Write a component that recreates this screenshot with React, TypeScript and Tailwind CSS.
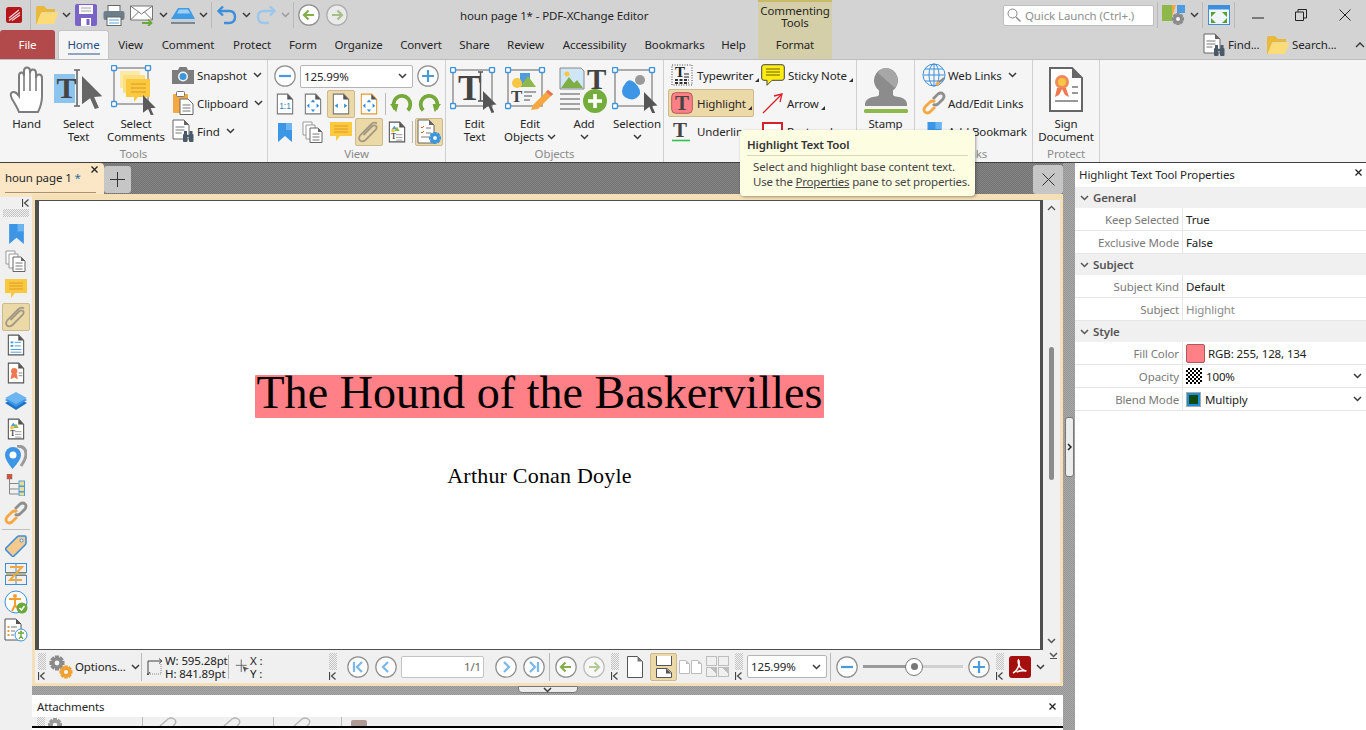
import type { ReactNode } from 'react'
import clsx from 'clsx'

// ---------- small shared drawings ----------

function Chev({ c = '#3a3a3a', className }: { c?: string; className?: string }) {
  return (
    <svg width="9" height="6" viewBox="0 0 9 6" className={clsx('shrink-0', className)}>
      <path d="M1 1l3.5 3.5L8 1" fill="none" stroke={c} strokeWidth="1.5" />
    </svg>
  )
}

function Corner() {
  return (
    <svg width="4" height="4" viewBox="0 0 4 4" className="ml-[2px] mt-[10px] shrink-0">
      <path d="M4 0v4H0z" fill="#333" />
    </svg>
  )
}

function Collapse() {
  return (
    <svg width="7" height="8" viewBox="0 0 7 8" className="shrink-0">
      <path d="M.5 0v8M6.5 .5L2.5 4l4 3.5" fill="none" stroke="#444" strokeWidth="1.2" />
    </svg>
  )
}

function Grip({ className }: { className?: string }) {
  return (
    <div className={clsx('flex h-[27px] w-[8px] shrink-0 flex-col justify-between', className)}>
      <div className="h-[17px] w-[8px] bg-[repeating-conic-gradient(#c4c4c4_0_25%,transparent_0_50%)] bg-[length:2px_2px]" />
      <Collapse />
    </div>
  )
}

function Divider({ className }: { className?: string }) {
  return <div className={clsx('w-px shrink-0 bg-[#b9b9b9]', className)} />
}

function Circle({ children, off, size = 22 }: { children: ReactNode; off?: boolean; size?: number }) {
  return (
    <svg width={size} height={size} viewBox="0 0 22 22" className="shrink-0" opacity={off ? 0.55 : 1}>
      <circle cx="11" cy="11" r="10.2" fill="#fdfdfd" stroke="#8f8f8f" strokeWidth="1.2" />
      {children}
    </svg>
  )
}

const ArrowL = <path d="M16 11H6.5M10.5 6.5L6 11l4.5 4.5" fill="none" stroke="#84ad4c" strokeWidth="2.2" />
const ArrowR = <path d="M6 11h9.5M11.5 6.5L16 11l-4.5 4.5" fill="none" stroke="#84ad4c" strokeWidth="2.2" />
const MinusG = <path d="M5 11h12" stroke="#4a9bdc" strokeWidth="2.2" />
const PlusG = <path d="M5 11h12M11 5v12" stroke="#4a9bdc" strokeWidth="2.2" />

function Doc({ w = 20, h = 24, children, stroke = '#555' }: { w?: number; h?: number; children?: ReactNode; stroke?: string }) {
  return (
    <svg width={w} height={h} viewBox="0 0 20 24" className="shrink-0">
      <path d="M1.5 1h11.5l5.5 6v16H1.5z" fill="#fff" stroke={stroke} strokeWidth="1.2" />
      <path d="M12.5 1l6 6h-6z" fill="#555" />
      {children}
    </svg>
  )
}

const Cursor = ({ x, y, s = 1, c = '#555' }: { x: number; y: number; s?: number; c?: string }) => (
  <path transform={`translate(${x} ${y}) scale(${s})`} d="M0 0l15 15-6 .5 3.5 8-3 1-3.5-8L0 21z" fill={c} />
)

const Frame = ({ x, y, w, h }: { x: number; y: number; w: number; h: number }) => (
  <>
    <rect x={x} y={y} width={w} height={h} fill="none" stroke="#9a9a9a" strokeWidth="1.6" />
    {[[x, y], [x + w, y], [x, y + h]].map(([a, b], i) => (
      <rect key={i} x={a - 2.5} y={b - 2.5} width="5" height="5" rx="1" fill="#fff" stroke="#3c95dc" strokeWidth="1.4" />
    ))}
  </>
)

const SerifT = ({ x, y, size, c = '#444' }: { x: number; y: number; size: number; c?: string }) => (
  <text x={x} y={y} fontFamily="Liberation Serif" fontWeight="700" fontSize={size} fill={c}>
    T
  </text>
)

function Binoculars({ x, y }: { x: number; y: number }) {
  return (
    <g transform={`translate(${x} ${y})`} fill="#4a5a68">
      <rect x="0" y="3" width="4.5" height="8" rx="1" />
      <rect x="6" y="3" width="4.5" height="8" rx="1" />
      <rect x="1" y="0" width="3" height="4" />
      <rect x="6.5" y="0" width="3" height="4" />
      <rect x="4" y="4" width="3" height="2" />
    </g>
  )
}

function Gear({ x, y, r, c }: { x: number; y: number; r: number; c: string }) {
  return (
    <g transform={`translate(${x} ${y})`}>
      {[0, 45, 90, 135].map((a) => (
        <rect key={a} x={-r * 0.28} y={-r} width={r * 0.56} height={r * 2} fill={c} transform={`rotate(${a})`} />
      ))}
      <circle r={r * 0.72} fill={c} />
      <circle r={r * 0.32} fill="#f5f5f5" />
    </g>
  )
}

function FolderShape({ w = 24, h = 20 }: { w?: number; h?: number }) {
  return (
    <svg width={w} height={h} viewBox="0 0 24 20" className="shrink-0">
      <path d="M1 3q0-2 2-2h6l3 3h8v3H7L2 19H1z" fill="#e8b93c" />
      <path d="M6 7.5h17.5L19 19H1.5z" fill="#fbdc78" />
    </svg>
  )
}

// ---------- quick access icons ----------

const Logo = () => (
  <svg width="16" height="16" viewBox="0 0 16 16" className="shrink-0">
    <rect width="16" height="16" rx="2.5" fill="#b5161c" />
    <path d="M3 11L13 3M3 13.5L14 5.5M6 13.5l8-5.5" stroke="#f6d8d8" strokeWidth="1.2" />
  </svg>
)

const Save = () => (
  <svg width="22" height="22" viewBox="0 0 22 22" className="shrink-0">
    <rect width="22" height="22" rx="2" fill="#7a63c6" />
    <rect x="4" y="1" width="14" height="9" fill="#f7f7f7" />
    <path d="M6 4h10M6 7h10" stroke="#aaa" />
    <rect x="6" y="14" width="10" height="8" fill="#fff" />
    <rect x="11.5" y="15" width="3" height="6" fill="#7a63c6" />
  </svg>
)

const Printer = () => (
  <svg width="22" height="21" viewBox="0 0 22 21" className="shrink-0">
    <rect x="5" y="0.5" width="12" height="7" fill="#fff" stroke="#666" />
    <rect x="0.5" y="6" width="21" height="9" rx="2" fill="#6d7d8a" />
    <rect x="4" y="12" width="14" height="8.5" fill="#fff" stroke="#666" />
    <path d="M6 15h10M6 18h10" stroke="#5aa6e0" />
  </svg>
)

const Mail = () => (
  <svg width="24" height="21" viewBox="0 0 24 21" className="shrink-0">
    <path d="M.5 1h22v14H.5z" fill="#fff" stroke="#777" />
    <path d="M.5 1L11.5 9l11-8M.5 15l8-8M22.5 15l-8-8" fill="none" stroke="#777" />
    <path d="M12 18h9M18 14.5l3.5 3.5-3.5 3" fill="none" stroke="#6aa83a" strokeWidth="1.8" />
  </svg>
)

const Cloud = () => (
  <svg width="24" height="17" viewBox="0 0 24 17" className="shrink-0">
    <path d="M7 1h11l6 11H0z" fill="#3d9ce6" />
    <path d="M8 2.5h9l2 4H6z" fill="#9ed0f5" />
    <rect y="12" width="24" height="3" fill="#c9ced2" />
    <rect y="15" width="24" height="2" fill="#7b8791" />
  </svg>
)

const Undo = ({ c = '#3d8fdc', flip }: { c?: string; flip?: boolean }) => (
  <svg width="20" height="20" viewBox="0 0 20 20" className={clsx('shrink-0', flip && '-scale-x-100')}>
    <path d="M6 1.5L1.5 6 6 10.5" fill="none" stroke={c} strokeWidth="2.4" />
    <path d="M2 6h10q6 0 6 6t-6 6H7" fill="none" stroke={c} strokeWidth="2.4" />
  </svg>
)

// ---------- ribbon icons ----------

const Hand = () => (
  <svg width="36" height="48" viewBox="0 0 36 48">
    <path
      d="M10 46Q8 41 3 33Q0 27 4 26Q7 25.500 10 30V10Q10 6.500 12.500 6.500Q15 6.500 15 10V5Q15 1.500 18 1.500Q21 1.500 21 5V7Q21 3.500 24 3.500Q27 3.500 27 7V12Q27 8.500 30 8.500Q33 8.500 33 12V30Q33 38 29 46Z"
      fill="#fff"
      stroke="#7d7d7d"
      strokeWidth="2"
    />
    <path d="M15 8V25M21 6V25M27 10V25" stroke="#7d7d7d" strokeWidth="1.6" fill="none" />
  </svg>
)

const SelectText = () => (
  <svg width="50" height="42" viewBox="0 0 50 42">
    <rect x="0" y="5" width="21" height="29" fill="#8cc4ee" />
    <SerifT x={2.5} y={29} size={30} />
    <path d="M20 1h6M23 1v36M20 37h6" stroke="#666" strokeWidth="1.6" fill="none" />
    <Cursor x={28} y={7} s={1.35} c="#666" />
  </svg>
)

const SelectComments = () => (
  <svg width="50" height="50" viewBox="0 0 50 50">
    <Frame x={3} y={3} w={34} h={36} />
    <rect x="9" y="6" width="20" height="17" fill="#fbe9a6" />
    <rect x="12" y="10" width="22" height="18" fill="#fcdf82" />
    <path d="M15 14h24v18H27l-4 5v-5h-8z" fill="#fbc93e" />
    <path d="M20 19h15M20 23h15M20 27h15" stroke="#d9992c" strokeWidth="1.2" />
    <Cursor x={32} y={30} s={0.85} c="#5b5b5b" />
  </svg>
)

const Camera = () => (
  <svg width="22" height="17" viewBox="0 0 22 17" className="shrink-0">
    <path d="M0 3h6l1.500-3h7L16 3h6v14H0z" fill="#7d7d7d" />
    <circle cx="11" cy="9.500" r="5" fill="#eef6fc" />
    <circle cx="11" cy="9.500" r="3.500" fill="#3d95dc" />
  </svg>
)

const Clipboard = () => (
  <svg width="22" height="24" viewBox="0 0 22 24" className="shrink-0">
    <rect x="1" y="3" width="15" height="19" rx="1" fill="#f5a742" />
    <rect x="4.500" y="0.500" width="8" height="5" rx="1" fill="#fff" stroke="#777" />
    <path d="M8 8h8l5 5v10.500H8z" fill="#fff" stroke="#666" />
    <path d="M10.500 14h8M10.500 17h8M10.500 20h8" stroke="#777" />
  </svg>
)

const FindDoc = ({ size = 22 }: { size?: number }) => (
  <svg width={size} height={size + 2} viewBox="0 0 22 24" className="shrink-0">
    <path d="M1 1h11l5 5v14H1z" fill="#fff" stroke="#666" />
    <path d="M12 1l5 5h-5z" fill="#666" />
    <path d="M3.500 8h9M3.500 11h9M3.500 14h6" stroke="#777" />
    <Binoculars x={11} y={12} />
  </svg>
)

function ViewDoc({ kind }: { kind: 'one' | 'fit' | 'width' | 'visible' }) {
  const stroke = kind === 'visible' ? '#e89a2c' : '#777'
  const arrows = (
    <g fill="#2f8fdc">
      <path d="M10 7l2.500 3h-5zM10 21l2.500-3h-5zM3 14l3-2.500v5zM17 14l-3-2.500v5z" />
    </g>
  )
  return (
    <Doc w={18} h={22} stroke={stroke}>
      {kind === 'one' && (
        <text x="10" y="18" fontSize="9.500" textAnchor="middle" fontFamily="Liberation Sans" fill="#2f7fc4">
          1:1
        </text>
      )}
      {(kind === 'fit' || kind === 'visible') && arrows}
      {kind === 'width' && (
        <g fill="#2f8fdc">
          <path d="M3 14l3.500-2.500v5zM17 14l-3.500-2.500v5z" />
        </g>
      )}
    </Doc>
  )
}

const Rotate = ({ flip }: { flip?: boolean }) => (
  <svg width="23" height="22" viewBox="0 0 22 20" className={clsx('shrink-0', flip && '-scale-x-100')}>
    <path d="M5 15A8 8 0 1 1 17 16" fill="none" stroke="#76a83a" strokeWidth="3.6" />
    <path d="M0 10l8 0-2 8z" fill="#76a83a" />
  </svg>
)

const BookmarkIc = ({ w = 14, h = 20 }: { w?: number; h?: number }) => (
  <svg width={w} height={h} viewBox="0 0 14 20" className="shrink-0">
    <path d="M0 1h14v19l-7-6-7 6z" fill="#3d95e6" />
    <path d="M8 1h6v7H8z" fill="#6db5f0" />
  </svg>
)

const Pages = () => (
  <svg width="22" height="22" viewBox="0 0 22 22" className="shrink-0">
    <path d="M1 1h9v13H1z" fill="#fff" stroke="#999" />
    <path d="M4 4h9v14H4z" fill="#fff" stroke="#999" />
    <path d="M8 7h8l4 4v10.500H8z" fill="#fff" stroke="#666" />
    <path d="M16 7l4 4h-4z" fill="#666" />
    <path d="M10.500 13h7M10.500 16h7M10.500 19h7" stroke="#777" />
  </svg>
)

const CommentIc = () => (
  <svg width="22" height="20" viewBox="0 0 22 20" className="shrink-0">
    <path d="M0 0h22v14H10l-4 5v-5H0z" fill="#fbc93e" />
    <path d="M4 4h14M4 7h14M4 10h14" stroke="#e0982c" />
  </svg>
)

const Clip = () => (
  <svg width="24" height="24" viewBox="0 0 24 24" className="shrink-0">
    <path
      d="M20 3.500Q17 1.500 14.500 4L3.500 15Q1 18 3 20.500Q5.500 22.500 8.500 20L18.500 10Q20.500 7.500 19 6Q17 4.500 15 6.500L6.500 15"
      fill="none"
      stroke="#a39a84"
      strokeWidth="1.8"
    />
  </svg>
)

const ContentDoc = () => (
  <Doc w={18} h={22}>
    <path d="M4 9l3-4 3 4z" fill="#4d9be0" />
    <path d="M7 11l3-5 3 5z" fill="#8fb84a" />
    <circle cx="5.500" cy="10.500" r="2" fill="#f6c644" />
    <text x="3.500" y="20" fontSize="8" fontWeight="700" fontFamily="Liberation Serif" fill="#444">
      T
    </text>
    <path d="M9 15h7M9 18h7M9 21h7" stroke="#777" strokeWidth="0.8" />
  </Doc>
)

const SettingsDoc = () => (
  <svg width="26" height="26" viewBox="0 0 26 26" className="shrink-0">
    <path d="M2 1h11l5 5v18H2z" fill="#fff" stroke="#666" />
    <path d="M13 1l5 5h-5z" fill="#666" />
    <path d="M5 8l1 1 2-2M5 13l1 1 2-2" fill="none" stroke="#d8562c" />
    <path d="M10 9h5M10 14h5M5 18h8" stroke="#777" />
    <Gear x={19} y={19} r={6} c="#3d95dc" />
  </svg>
)

const EditText = () => (
  <svg width="50" height="46" viewBox="0 0 50 46">
    <Frame x={3} y={3} w={39} h={36} />
    <SerifT x={8} y={33} size={35} />
    <path d="M28 5h5M30.500 5v29M28 34h5" stroke="#555" strokeWidth="1.4" fill="none" />
    <Cursor x={33} y={24} s={0.9} />
  </svg>
)

const EditObjects = () => (
  <svg width="50" height="46" viewBox="0 0 50 46">
    <Frame x={3} y={3} w={34} h={36} />
    <path d="M15 6h10v11H15z" fill="#4d9be0" />
    <path d="M15 20l8-11 8 11z" fill="#8fb84a" />
    <circle cx="12" cy="16" r="5" fill="#f6c644" />
    <SerifT x={6} y={35} size={17} />
    <path d="M19 25h12M19 29h8M19 33h6" stroke="#888" strokeWidth="1.3" />
    <path d="M28 38l15-15 5 4-15 15-7 1z" fill="#f5a742" />
    <path d="M41 25l5 4 2-2-5-4z" fill="#e8705a" />
  </svg>
)

const AddIc = () => (
  <svg width="48" height="46" viewBox="0 0 48 46" className="overflow-visible">
    <path d="M0 1h21l3 3v18H0z" fill="#cfe6f7" stroke="#888" />
    <path d="M1 21l8-11 5 6 3-3 6 8z" fill="#7fae46" />
    <circle cx="7" cy="7" r="2.500" fill="#f6c644" />
    <SerifT x={27} y={22} size={29} />
    <path d="M0 27h20M0 32h20M0 37h20M0 42h20" stroke="#888" strokeWidth="1.6" />
    <circle cx="35" cy="34" r="12" fill="#74ad3c" />
    <path d="M28 34h14M35 27v14" stroke="#fff" strokeWidth="3.600" />
  </svg>
)

const Selection = () => (
  <svg width="50" height="46" viewBox="0 0 50 46">
    <Frame x={3} y={3} w={37} h={36} />
    <circle cx="28" cy="13" r="5" fill="#9a9a9a" />
    <path d="M13 17q4-7 10-1t5 11q-4 7-11 5T10 24q0-4 3-7z" fill="#3d95e6" />
    <Cursor x={32} y={25} s={0.9} />
  </svg>
)

const Typewriter = () => (
  <svg width="22" height="22" viewBox="0 0 22 22" className="shrink-0">
    <rect x="1" y="1" width="20" height="20" fill="none" stroke="#444" strokeDasharray="1 1.500" />
    <SerifT x={4} y={13} size={15} c="#222" />
    <path d="M13 10h5M13 13h5" stroke="#222" />
    <path d="M4 16h14M4 19h14" stroke="#333" strokeWidth="1.800" strokeDasharray="3 1.500" />
  </svg>
)

const Sticky = () => (
  <svg width="24" height="22" viewBox="0 0 24 22" className="shrink-0">
    <path d="M3 .7h18q2.300 0 2.300 2.300v11q0 2.300-2.300 2.300H11l-5 5v-5H3q-2.300 0-2.300-2.300V3Q.7.7 3 .7z" fill="#ffec12" stroke="#444" />
    <path d="M5 5h14M5 8h14M5 11h14" stroke="#6a6200" />
  </svg>
)

const HighlightIc = () => (
  <svg width="22" height="22" viewBox="0 0 22 22" className="shrink-0">
    <rect x=".7" y=".7" width="20.600" height="20.600" rx="4" fill="#ff8086" stroke="#b25a5a" />
    <SerifT x={4} y={18} size={21} />
  </svg>
)

const ArrowIc = () => (
  <svg width="21" height="21" viewBox="0 0 21 21" className="shrink-0">
    <path d="M1 20L19 2" stroke="#d8202a" strokeWidth="1.300" />
    <path d="M12 3l8-2-2 8" fill="none" stroke="#d8202a" strokeWidth="1.300" />
  </svg>
)

const UnderlineIc = () => (
  <svg width="20" height="22" viewBox="0 0 20 22" className="shrink-0 overflow-visible">
    <SerifT x={2} y={17} size={21} />
    <path d="M1 20.500h18" stroke="#2fc24a" strokeWidth="1.600" />
  </svg>
)

const Stamp = () => (
  <svg width="46" height="46" viewBox="0 0 46 46">
    <path d="M23 1A12.500 12.500 0 0 1 30 23.500V27q0 2 3 2.500 10 1 11 7V39H2v-2.500q1-6 11-7 3-.5 3-2.500V23.500A12.500 12.500 0 0 1 23 1z" fill="#8c8c8c" />
    <path d="M23 1A12.500 12.500 0 0 1 32 21L15 6q3-5 8-5z" fill="#a7a7a7" />
    <rect x="1" y="42" width="44" height="4" rx="1.500" fill="#8fb84a" />
  </svg>
)

const Globe = () => (
  <svg width="25" height="24" viewBox="0 0 25 24" className="shrink-0">
    <g fill="none" stroke="#3d8fdc">
      <circle cx="12" cy="12" r="11" />
      <ellipse cx="12" cy="12" rx="5" ry="11" />
      <path d="M12 1v22M1.500 12h21M3 6h18M3 18h18" />
    </g>
    <path d="M15 21l7-6" stroke="#888" strokeWidth="2" />
    <path d="M14 22l3-3" stroke="#f5a742" strokeWidth="2.600" />
  </svg>
)

const LinkIc = ({ size = 24 }: { size?: number }) => (
  <svg width={size} height={size} viewBox="0 0 24 24" className="shrink-0">
    <path d="M11 8l5-5q3-2 5 0t0 5l-5 5q-3 2-5 0" fill="none" stroke="#8f8f8f" strokeWidth="2.800" />
    <path d="M13 16l-5 5q-3 2-5 0t0-5l5-5q3-2 5 0" fill="none" stroke="#f5a742" strokeWidth="2.800" />
  </svg>
)

const Sign = () => (
  <svg width="36" height="46" viewBox="0 0 36 46">
    <path d="M2 1h22l10 10v33H2z" fill="#fff" stroke="#666" strokeWidth="2" />
    <path d="M24 1l10 10H24z" fill="#666" />
    <circle cx="14" cy="15" r="7" fill="#ef8a5a" />
    <circle cx="14" cy="15" r="4" fill="#f6c644" />
    <path d="M9 21l-2 9 4-2 3-6 3 6 4 2-3-9z" fill="#ef7a52" />
    <path d="M24 20h6M24 26h6M7 34h23" stroke="#777" strokeWidth="1.600" />
  </svg>
)

// ---------- sidebar only icons ----------

const FormDoc = () => (
  <Doc w={18} h={22}>
    <path d="M4 8h3v2H4zM4 12h3v2H4z" fill="#3d95dc" />
    <path d="M8.500 9h7M8.500 13h7M4 17h12M4 20h12" stroke="#3d95dc" />
  </Doc>
)

const CertDoc = () => (
  <Doc w={18} h={22}>
    <circle cx="8" cy="10" r="3.500" fill="#ef7a52" />
    <path d="M5 13l-1 6 4-2 4 2-1-6z" fill="#ef7a52" />
    <path d="M13 12h4M13 15h4" stroke="#777" />
  </Doc>
)

const Layers = () => (
  <svg width="22" height="18" viewBox="0 0 22 18" className="shrink-0">
    <path d="M0 11l11-6 11 6-11 7z" fill="#1f74c4" />
    <path d="M0 8l11-6 11 6-11 7z" fill="#3d95e6" />
    <path d="M0 6l11-6 11 6-11 6z" fill="#6db5f0" />
  </svg>
)

const Pin = () => (
  <svg width="22" height="24" viewBox="0 0 22 24" className="shrink-0">
    <path d="M12 1q9 0 9 8 0 5-5 12" fill="none" stroke="#9a9a9a" strokeWidth="3" />
    <path d="M7.500 24Q0 15 0 10a8 8 0 0 1 16 0q0 5-8.500 14z" fill="#3d95e6" />
    <circle cx="8" cy="10" r="3.500" fill="#fff" />
  </svg>
)

const Tree = () => (
  <svg width="20" height="22" viewBox="0 0 20 22" className="shrink-0">
    <rect x="1" y="0" width="5" height="5" fill="#d8503c" stroke="#777" strokeWidth=".5" />
    <path d="M3.500 5v15h9M3.500 9.500h9M3.500 15h9" fill="none" stroke="#888" />
    <rect x="13" y="7" width="5.500" height="5" fill="#ecdc90" stroke="#4d9be0" />
    <rect x="13" y="12.500" width="5.500" height="5" fill="#ecdc90" stroke="#4d9be0" />
    <rect x="13" y="18" width="5.500" height="4" fill="#ecdc90" stroke="#4d9be0" />
  </svg>
)

const Tag = () => (
  <svg width="22" height="22" viewBox="0 0 22 22" className="shrink-0">
    <path d="M1 13L12 2q1-1 2-1h6q1 0 1 1v6q0 1-1 2L9 21q-1 1-2 0l-6-6q-1-1 0-2z" fill="#f6c98c" stroke="#3d8fdc" strokeWidth="1.600" />
    <circle cx="16.500" cy="5.500" r="1.500" fill="#fff" stroke="#3d8fdc" />
  </svg>
)

const Zorder = () => (
  <svg width="22" height="22" viewBox="0 0 22 22" className="shrink-0">
    <rect x=".5" y=".5" width="21" height="9" fill="none" stroke="#3d8fdc" />
    <rect x=".5" y="12.500" width="21" height="9" fill="none" stroke="#3d8fdc" />
    <path d="M11 0v22" stroke="#3d8fdc" />
    <path d="M5 4h12L5 17h12M1 11h20" fill="none" stroke="#f0a83c" strokeWidth="2" />
  </svg>
)

const Access = () => (
  <svg width="24" height="24" viewBox="0 0 24 24" className="shrink-0">
    <circle cx="12" cy="12" r="11" fill="#fff" stroke="#3d8fdc" />
    <circle cx="11" cy="6" r="2" fill="#f0a030" />
    <path d="M5 9h12M11 9v6l-3 6M11 15l2 3" fill="none" stroke="#f0a030" strokeWidth="2" />
    <circle cx="18" cy="18" r="5.500" fill="#6aa83a" />
    <path d="M15.500 18l2 2 3-4" fill="none" stroke="#fff" strokeWidth="1.500" />
  </svg>
)

const AccessDoc = () => (
  <svg width="24" height="24" viewBox="0 0 24 24" className="shrink-0">
    <path d="M1 1h11l5 5v16H1z" fill="#fff" stroke="#555" />
    <path d="M12 1l5 5h-5z" fill="#555" />
    <path d="M3.500 8h2v2h-2zM3.500 12h2v2h-2zM3.500 16h2v2h-2z" fill="#e0a040" />
    <path d="M7 9h6M7 13h4M7 17h3" stroke="#777" />
    <circle cx="17" cy="17" r="6" fill="#fff" stroke="#3d8fdc" />
    <path d="M14 15h6M17 15v3l-2 3M17 18l2 3" fill="none" stroke="#6aa83a" strokeWidth="1.300" />
    <circle cx="17" cy="13.500" r="1" fill="#6aa83a" />
  </svg>
)

const PageThumb = ({ c = '#bdbdbd' }: { c?: string }) => (
  <svg width="11" height="14" viewBox="0 0 11 14" className="shrink-0">
    <path d="M.5 .5h6.500l3.500 3.500v9.500H.5z" fill="#fff" stroke={c} />
    <path d="M7 .5l3.500 3.500H7z" fill={c} />
  </svg>
)

const SmallClip = () => (
  <svg width="18" height="9" viewBox="0 0 18 9" className="shrink-0">
    <path d="M1 9l8-7q3-2 6 0t1 5l-2 2" fill="none" stroke="#b5b5b5" strokeWidth="1.400" />
  </svg>
)

// ---------- ribbon pieces ----------

function Group({ label, className, children }: { label: string; className: string; children: ReactNode }) {
  return (
    <div className={clsx('flex h-full shrink-0 flex-col border-r border-[#d0d0d0]', className)}>
      <div className="flex flex-1">{children}</div>
      <div className="h-[16px] text-center leading-[15px] text-[#8b8b8b]">{label}</div>
    </div>
  )
}

function Big({ icon, lines, className, chev }: { icon: ReactNode; lines: string[]; className: string; chev?: boolean }) {
  return (
    <div className={clsx('flex shrink-0 flex-col items-center', className)}>
      <div className="flex h-[57px] items-center justify-center pt-[2px]">{icon}</div>
      {lines.map((l, i) => (
        <div key={l} className="flex h-[13px] items-center gap-[3px] whitespace-nowrap leading-[13px]">
          {l}
          {chev && lines.length > 1 && i === lines.length - 1 && <Chev />}
        </div>
      ))}
      {chev && lines.length === 1 && (
        <div className="flex h-[13px] items-center">
          <Chev />
        </div>
      )}
    </div>
  )
}

function Small({ icon, label, chev, className }: { icon: ReactNode; label: string; chev?: boolean; className?: string }) {
  return (
    <div className={clsx('flex h-[28px] items-center whitespace-nowrap', className)}>
      <div className="flex w-[26px] shrink-0 justify-center">{icon}</div>
      <span className="ml-[1px]">{label}</span>
      {chev && <Chev className="ml-[6px]" />}
    </div>
  )
}

function Cell({ children, active, className }: { children?: ReactNode; active?: boolean; className?: string }) {
  return (
    <div
      className={clsx(
        'flex h-[28px] w-[28px] shrink-0 items-center justify-center rounded-[2px]',
        active && 'border border-[#cdb98c] bg-[#ecd9a8]',
        className,
      )}
    >
      {children}
    </div>
  )
}

function ZoomCombo({ className }: { className: string }) {
  return (
    <div className={clsx('flex h-[23px] shrink-0 items-center justify-between rounded-[2px] border border-[#b5b5b5] bg-white pl-[3px] pr-[5px]', className)}>
      <span>125.99%</span>
      <Chev />
    </div>
  )
}

const tabs = [
  { label: 'View', w: 'w-[43px]' },
  { label: 'Comment', w: 'w-[72px]' },
  { label: 'Protect', w: 'w-[56px]' },
  { label: 'Form', w: 'w-[46px]' },
  { label: 'Organize', w: 'w-[65px]' },
  { label: 'Convert', w: 'w-[60px]' },
  { label: 'Share', w: 'w-[47px]' },
  { label: 'Review', w: 'w-[55px]' },
  { label: 'Accessibility', w: 'w-[83px]' },
  { label: 'Bookmarks', w: 'w-[77px]' },
  { label: 'Help', w: 'w-[41px]' },
]

function TitleBar() {
  return (
    <div className="flex h-[59px] shrink-0">
      <div className="flex w-[758px] shrink-0 flex-col">
        <div className="flex h-[30px] items-center">
          <div className="ml-[6px]">
            <Logo />
          </div>
          <Divider className="ml-[8px] h-[30px]" />
          <div className="ml-[4px]">
            <FolderShape />
          </div>
          <Chev className="ml-[3px]" />
          <div className="ml-[4px]">
            <Save />
          </div>
          <div className="ml-[6px]">
            <Printer />
          </div>
          <div className="ml-[5px]">
            <Mail />
          </div>
          <Chev className="ml-[5px]" />
          <div className="ml-[3px]">
            <Cloud />
          </div>
          <Chev className="ml-[4px]" />
          <Divider className="ml-[3px] h-[26px]" />
          <div className="ml-[5px]">
            <Undo />
          </div>
          <Chev className="ml-[5px]" />
          <div className="ml-[5px]">
            <Undo flip c="#9dc6ec" />
          </div>
          <Chev className="ml-[5px]" c="#9a9a9a" />
          <Divider className="ml-[3px] h-[26px]" />
          <div className="ml-[4px]">
            <Circle>{ArrowL}</Circle>
          </div>
          <div className="ml-[6px]">
            <Circle off>{ArrowR}</Circle>
          </div>
          <span className="ml-[112px] whitespace-nowrap">houn page 1* - PDF-XChange Editor</span>
        </div>
        <div className="flex h-[29px] items-end">
          <div className="flex h-[29px] w-[55px] items-center justify-center rounded-t-[3px] bg-[#b24a4c] text-white">File</div>
          <div className="ml-[3px] flex h-[29px] w-[51px] flex-col items-center justify-center rounded-t-[3px] border border-b-0 border-[#c4c4c4] bg-[#f5f5f5] text-[#1f4e86]">
            <span className="mt-[2px]">Home</span>
            <div className="mt-[1px] h-[2px] w-[32px] bg-[#8fa6c0]" />
          </div>
          {tabs.map((t) => (
            <div key={t.label} className={clsx('flex h-[29px] shrink-0 items-center justify-center', t.w)}>
              {t.label}
            </div>
          ))}
        </div>
      </div>
      <div className="flex w-[74px] shrink-0 flex-col items-center border-t-2 border-[#c9ba6a] bg-[#d4cfa8]">
        <div className="mt-[3px] flex h-[24px] flex-col items-center">
          <span className="h-[12px] leading-[12px]">Commenting</span>
          <span className="h-[12px] leading-[12px]">Tools</span>
        </div>
        <div className="mt-[1px] flex h-[29px] items-center">Format</div>
      </div>
      <div className="flex flex-1 flex-col">
        <div className="flex h-[30px] items-center">
          <div className="ml-[171px] flex h-[21px] w-[151px] items-center rounded-[2px] border border-[#bdbdbd] bg-white pl-[3px] text-[#8f8f8f]">
            <svg width="14" height="14" viewBox="0 0 14 14" className="shrink-0">
              <circle cx="5.500" cy="5.500" r="4.500" fill="none" stroke="#888" />
              <path d="M9 9l4.500 4.500" stroke="#888" strokeWidth="1.300" />
            </svg>
            <span className="ml-[4px] whitespace-nowrap">Quick Launch (Ctrl+.)</span>
          </div>
          <Divider className="ml-[3px] h-[26px]" />
          <svg width="24" height="22" viewBox="0 0 24 22" className="ml-[4px] shrink-0">
            <path d="M0 1h10v16H0z" fill="#8fb84a" />
            <path d="M10 1l4 0-4 12z" fill="#f5a742" />
            <rect x="15" y="1" width="8" height="8" fill="#4d9be0" />
            <Gear x={16} y={15} r={6} c="#8a8a8a" />
          </svg>
          <Chev className="ml-[4px]" />
          <Divider className="ml-[3px] h-[26px]" />
          <svg width="22" height="20" viewBox="0 0 22 20" className="ml-[5px] shrink-0">
            <rect x=".5" y=".5" width="21" height="19" fill="#eef6fc" stroke="#3d8fdc" />
            <rect x=".5" y=".5" width="21" height="4" fill="#3d8fdc" />
            <path d="M3 7h5L3 12zM19 7h-5l5 5zM3 18h5l-5-5zM19 18h-5l5-5z" fill="#5c9e36" />
          </svg>
          <Divider className="ml-[4px] h-[26px]" />
          <svg width="12" height="2" viewBox="0 0 12 2" className="ml-[17px] mt-[5px] shrink-0">
            <path d="M0 1h12" stroke="#222" />
          </svg>
          <svg width="12" height="12" viewBox="0 0 12 12" className="ml-[31px] shrink-0">
            <path d="M.5 3h8v8.500h-8zM3 3V.5h8.500v8.500H8.500" fill="none" stroke="#222" />
          </svg>
          <svg width="12" height="12" viewBox="0 0 12 12" className="ml-[32px] shrink-0">
            <path d="M.5 .5l11 11M11.500 .5l-11 11" stroke="#222" />
          </svg>
        </div>
        <div className="flex h-[29px] items-center">
          <div className="ml-[371px] w-[25px] shrink-0">
            <FindDoc />
          </div>
          <span className="w-[38px] shrink-0 whitespace-nowrap">Find...</span>
          <div className="h-[20px] w-[26px] shrink-0">
            <FolderShape />
          </div>
          <span className="w-[63px] shrink-0 whitespace-nowrap">Search...</span>
          <svg width="10" height="6" viewBox="0 0 10 6" className="shrink-0">
            <path d="M1 5l4-4 4 4" fill="none" stroke="#333" strokeWidth="1.300" />
          </svg>
        </div>
      </div>
    </div>
  )
}

function Ribbon() {
  return (
    <div className="flex h-[104px] shrink-0 border-y border-t-[#bdbdbd] border-b-[#3f3f3f] bg-[#f5f5f5]">
      <Group label="Tools" className="w-[268px]">
        <Big className="w-[53px]" icon={<Hand />} lines={['Hand']} />
        <Big className="w-[51px]" icon={<SelectText />} lines={['Select', 'Text']} />
        <Big className="ml-[2px] w-[60px]" icon={<SelectComments />} lines={['Select', 'Comments']} />
        <div className="ml-[4px] flex flex-col pt-[1px]">
          <Small icon={<Camera />} label="Snapshot" chev />
          <Small icon={<Clipboard />} label="Clipboard" chev />
          <Small icon={<FindDoc />} label="Find" chev />
        </div>
      </Group>
      <Group label="View" className="w-[178px]">
        <div className="flex flex-col pl-[3px] pt-[2px]">
          <div className="flex h-[28px] items-center">
            <Cell>
              <Circle>{MinusG}</Circle>
            </Cell>
            <ZoomCombo className="ml-[1px] w-[113px]" />
            <Cell className="ml-[1px]">
              <Circle>{PlusG}</Circle>
            </Cell>
          </div>
          <div className="flex">
            <Cell>
              <ViewDoc kind="one" />
            </Cell>
            <Cell>
              <ViewDoc kind="fit" />
            </Cell>
            <Cell active>
              <ViewDoc kind="width" />
            </Cell>
            <Cell>
              <ViewDoc kind="visible" />
            </Cell>
            <Divider className="ml-[2px] mt-[3px] h-[22px]" />
            <Cell className="ml-[1px]">
              <Rotate />
            </Cell>
            <Cell>
              <Rotate flip />
            </Cell>
          </div>
          <div className="flex">
            <Cell>
              <BookmarkIc />
            </Cell>
            <Cell>
              <Pages />
            </Cell>
            <Cell>
              <CommentIc />
            </Cell>
            <Cell active>
              <Clip />
            </Cell>
            <Cell>
              <ContentDoc />
            </Cell>
            <Divider className="ml-[1px] mt-[3px] h-[22px]" />
            <Cell active className="ml-[2px]">
              <SettingsDoc />
            </Cell>
          </div>
        </div>
      </Group>
      <Group label="Objects" className="w-[218px]">
        <Big className="w-[57px]" icon={<EditText />} lines={['Edit', 'Text']} />
        <Big className="w-[54px]" icon={<EditObjects />} lines={['Edit', 'Objects']} chev />
        <Big className="w-[54px]" icon={<AddIc />} lines={['Add']} chev />
        <Big className="w-[52px]" icon={<Selection />} lines={['Selection']} chev />
      </Group>
      <div className="flex h-full w-[193px] shrink-0 border-r border-[#d0d0d0] pt-[1px]">
        <div className="flex w-[97px] shrink-0 flex-col pl-[4px]">
          <div className="flex h-[28px] items-center pl-[3px]">
            <Typewriter />
            <span className="ml-[4px]">Typewriter</span>
            <Corner />
          </div>
          <div className="flex h-[28px] w-[86px] items-center rounded-[2px] border border-[#cdb98c] bg-[#ecd9a8] pl-[2px]">
            <HighlightIc />
            <span className="ml-[4px]">Highlight</span>
            <Corner />
          </div>
          <div className="flex h-[28px] items-center pl-[3px]">
            <UnderlineIc />
            <span className="ml-[6px]">Underline</span>
          </div>
        </div>
        <div className="flex flex-col">
          <div className="flex h-[28px] items-center">
            <Sticky />
            <span className="ml-[3px] whitespace-nowrap">Sticky Note</span>
            <Corner />
          </div>
          <div className="flex h-[28px] items-center pl-[1px]">
            <ArrowIc />
            <span className="ml-[4px]">Arrow</span>
            <Corner />
          </div>
          <div className="flex h-[28px] items-center pl-[1px]">
            <div className="h-[18px] w-[21px] border-2 border-[#d8202a] bg-white" />
            <span className="ml-[4px]">Rectangle</span>
          </div>
        </div>
      </div>
      <Group label="" className="w-[58px]">
        <Big className="w-[57px]" icon={<Stamp />} lines={['Stamp']} />
      </Group>
      <Group label="Links" className="w-[118px]">
        <div className="flex flex-col pl-[6px] pt-[1px]">
          <Small icon={<Globe />} label="Web Links" chev />
          <Small icon={<LinkIc />} label="Add/Edit Links" />
          <Small icon={<BookmarkIc w={15} h={20} />} label="Add Bookmark" />
        </div>
      </Group>
      <Group label="Protect" className="w-[67px]">
        <Big className="w-[66px]" icon={<Sign />} lines={['Sign', 'Document']} />
      </Group>
    </div>
  )
}

const sideIcons: ReactNode[] = [
  <BookmarkIc w={15} h={21} />,
  <Pages />,
  <CommentIc />,
  <Clip />,
  <FormDoc />,
  <CertDoc />,
  <Layers />,
  <ContentDoc />,
  <Pin />,
  <Tree />,
  <LinkIc />,
]

function Sidebar() {
  return (
    <div className="flex h-full w-[32px] shrink-0 flex-col items-center bg-[#f0f0f0]">
      <div className="h-[3px] w-full shrink-0 bg-[#fbe7c6]" />
      <div className="flex h-[10px] w-full items-end justify-end pr-[3px]">
        <Collapse />
      </div>
      <div className="mt-[2px] h-[8px] w-[26px] bg-[repeating-conic-gradient(#c4c4c4_0_25%,transparent_0_50%)] bg-[length:2px_2px]" />
      <div className="mt-[2px] flex flex-col items-center">
        {sideIcons.map((ic, i) => (
          <Cell key={i} active={i === 3}>
            {ic}
          </Cell>
        ))}
      </div>
      <div className="my-[2px] h-px w-[28px] bg-[#c0c0c0]" />
      <div className="flex flex-col items-center">
        <Cell>
          <Tag />
        </Cell>
        <Cell>
          <Zorder />
        </Cell>
        <Cell>
          <Access />
        </Cell>
        <Cell>
          <AccessDoc />
        </Cell>
      </div>
    </div>
  )
}

function PageView() {
  return (
    <div className="flex h-[450px] shrink-0">
      <div className="w-[4px] shrink-0 bg-[#4f4f4f]" />
      <div className="flex w-[1001px] shrink-0 flex-col items-center border-y border-y-[#4f4f4f] bg-white pt-[174px] text-black [font-family:'Liberation_Serif',serif]">
        <div className="h-[43px] rounded-[1px] bg-[#ff8086] px-[1px] text-[46px] leading-[35px] tracking-[0.05px] whitespace-nowrap">
          The Hound of the Baskervilles
        </div>
        <div className="mt-[44px] text-[22px] leading-[28px] tracking-[0.2px] whitespace-nowrap">Arthur Conan Doyle</div>
      </div>
      <div className="w-[3px] shrink-0 bg-[#4f4f4f]" />
      <div className="flex w-[17px] shrink-0 flex-col items-center bg-[#f0f0f0]">
        <svg width="9" height="6" viewBox="0 0 9 6" className="mt-[5px] shrink-0">
          <path d="M1 5l3.500-3.500L8 5" fill="none" stroke="#555" strokeWidth="1.300" />
        </svg>
        <div className="mt-[136px] h-[133px] w-[5px] rounded-full bg-[#8c8c8c]" />
        <Chev c="#555" className="mt-[158px]" />
      </div>
    </div>
  )
}

function PageToolbar() {
  return (
    <div className="flex h-[33px] shrink-0 items-center bg-[#f0f0f0] pl-[2px] text-[#222]">
      <Grip className="ml-[1px]" />
      <svg width="26" height="26" viewBox="0 0 26 26" className="ml-[2px] shrink-0">
        <Gear x={9} y={9} r={7.5} c="#8a8a8a" />
        <Gear x={18} y={18} r={6.5} c="#f0a030" />
      </svg>
      <span className="ml-[1px] w-[55px] shrink-0 whitespace-nowrap">Options...</span>
      <Chev className="ml-[1px]" />
      <Divider className="ml-[1px] h-[28px]" />
      <svg width="16" height="20" viewBox="0 0 16 20" className="ml-[5px] shrink-0">
        <path d="M1 18V4h13M12 1.500L15 4l-3 2.500" fill="none" stroke="#444" />
        <path d="M-1 15l2 3 2-3" fill="none" stroke="#444" />
        <path d="M3 17h11V6" fill="none" stroke="#888" strokeDasharray="1 1" />
      </svg>
      <div className="ml-[2px] flex w-[63px] shrink-0 flex-col leading-[13px] whitespace-nowrap">
        <span>W: 595.28pt</span>
        <span>H: 841.89pt</span>
      </div>
      <Divider className="h-[24px]" />
      <svg width="15" height="18" viewBox="0 0 18 18" className="ml-[6px] shrink-0">
        <path d="M1 7h13M7.500 0v15" stroke="#555" />
        <path d="M9 8l8 3-4 1-1 4z" fill="#555" />
      </svg>
      <div className="flex w-[79px] shrink-0 flex-col leading-[13px]">
        <span>X :</span>
        <span>Y :</span>
      </div>
      <Grip />
      <div className="ml-[10px]">
        <Circle>
          <path d="M7 6v10M15 6l-5 5 5 5" fill="none" stroke="#79b8ea" strokeWidth="2.200" />
        </Circle>
      </div>
      <div className="ml-[6px]">
        <Circle>
          <path d="M13 6l-5 5 5 5" fill="none" stroke="#79b8ea" strokeWidth="2.200" />
        </Circle>
      </div>
      <div className="ml-[4px] flex h-[22px] w-[83px] shrink-0 items-center justify-end rounded-[2px] border border-[#c4c4c4] bg-white pr-[2px] text-[#666]">
        1/1
      </div>
      <div className="ml-[11px]">
        <Circle>
          <path d="M9 6l5 5-5 5" fill="none" stroke="#79b8ea" strokeWidth="2.200" />
        </Circle>
      </div>
      <div className="ml-[6px]">
        <Circle>
          <path d="M7 6l5 5-5 5M15 6v10" fill="none" stroke="#79b8ea" strokeWidth="2.200" />
        </Circle>
      </div>
      <Divider className="ml-[4px] h-[28px]" />
      <div className="ml-[5px]">
        <Circle>{ArrowL}</Circle>
      </div>
      <div className="ml-[6px]">
        <Circle off>{ArrowR}</Circle>
      </div>
      <Grip className="ml-[6px]" />
      <svg width="16" height="22" viewBox="0 0 16 22" className="ml-[8px] shrink-0">
        <path d="M.5 .5h10l5 5v16H.5z" fill="#fff" stroke="#555" />
        <path d="M10.500 .5l5 5h-5z" fill="#777" />
      </svg>
      <div className="ml-[7px] flex h-[28px] w-[27px] shrink-0 items-center justify-center rounded-[2px] border border-[#cdb98c] bg-[#ecd9a8]">
        <svg width="16" height="22" viewBox="0 0 16 22">
          <path d="M.5 0v9.500h15V0" fill="#fff" stroke="#555" />
          <path d="M.5 12.500h10.500l4.500 4v5H.5z" fill="#fff" stroke="#555" />
          <path d="M10 12.500l5.500 5H10z" fill="#555" />
        </svg>
      </div>
      <div className="ml-[2px] flex shrink-0 gap-[1px]">
        <PageThumb />
        <PageThumb />
      </div>
      <div className="ml-[4px] grid shrink-0 grid-cols-2 gap-[1px]">
        <div className="h-[10px] w-[11px] border border-[#bdbdbd]" />
        <div className="h-[10px] w-[11px] border border-[#bdbdbd]" />
        <div className="h-[10px] w-[11px] border border-[#bdbdbd] bg-[linear-gradient(45deg,transparent_70%,#bdbdbd_70%)]" />
        <div className="h-[10px] w-[11px] border border-[#bdbdbd] bg-[linear-gradient(45deg,transparent_70%,#bdbdbd_70%)]" />
      </div>
      <Grip className="ml-[6px]" />
      <ZoomCombo className="ml-[4px] w-[80px]" />
      <Divider className="ml-[3px] h-[28px]" />
      <div className="ml-[5px]">
        <Circle>{MinusG}</Circle>
      </div>
      <div className="relative ml-[5px] flex w-[100px] shrink-0 items-center">
        <div className="h-[3px] w-[51px] bg-[#9a9a9a]" />
        <div className="h-[3px] w-[49px] bg-[#d0d0d0]" />
        <div className="absolute left-[42px] flex h-[18px] w-[18px] items-center justify-center rounded-full border border-[#777] bg-white">
          <div className="h-[7px] w-[7px] rounded-full bg-[#777]" />
        </div>
      </div>
      <div className="ml-[5px]">
        <Circle>{PlusG}</Circle>
      </div>
      <Grip className="ml-[6px]" />
      <svg width="22" height="22" viewBox="0 0 22 22" className="ml-[5px] shrink-0">
        <rect width="22" height="22" rx="3" fill="#a5100f" />
        <path d="M4 17q4-2 6-8 .5-4-.5-5-1 2 1 6 2 4 7 5-5-1-10 1" fill="none" stroke="#fff" strokeWidth="1.600" />
      </svg>
      <Chev className="ml-[5px]" />
      <div className="ml-auto flex w-[14px] shrink-0 flex-col items-center self-stretch bg-[#f0f0f0] pt-[2px]">
        <Chev c="#555" />
        <div className="h-px w-[7px] bg-[#555]" />
      </div>
    </div>
  )
}

function PropSection({ title }: { title: string }) {
  return (
    <div className="flex h-[21px] shrink-0 items-center bg-[#f0f0f0] pl-[5px] font-semibold text-[#555]">
      <Chev c="#555" />
      <span className="ml-[4px]">{title}</span>
    </div>
  )
}

function PropRow({ label, children, chev }: { label: string; children: ReactNode; chev?: boolean }) {
  return (
    <div className="flex h-[23px] shrink-0 items-center border-b border-[#e6e6e6]">
      <div className="flex h-full w-[108px] shrink-0 items-center justify-end border-r border-[#e6e6e6] pr-[3px] whitespace-nowrap text-[#7a7a7a]">
        {label}
      </div>
      <div className="flex flex-1 items-center pl-[3px] text-[#222]">{children}</div>
      {chev && <Chev className="mr-[4px]" />}
    </div>
  )
}

function Properties() {
  return (
    <div className="flex h-full w-[291px] shrink-0 flex-col bg-white">
      <div className="flex h-[24px] shrink-0 items-center justify-between pb-[2px] pl-[4px] pr-[4px]">
        <span>Highlight Text Tool Properties</span>
        <svg width="7" height="7" viewBox="0 0 7 7" className="mb-[4px] shrink-0">
          <path d="M.5 .5l6 6M6.500 .5l-6 6" stroke="#222" strokeWidth="1.300" />
        </svg>
      </div>
      <PropSection title="General" />
      <PropRow label="Keep Selected">True</PropRow>
      <PropRow label="Exclusive Mode">False</PropRow>
      <PropSection title="Subject" />
      <PropRow label="Subject Kind">Default</PropRow>
      <PropRow label="Subject">
        <span className="text-[#8a8a8a]">Highlight</span>
      </PropRow>
      <PropSection title="Style" />
      <PropRow label="Fill Color">
        <div className="h-[19px] w-[19px] rounded-[2px] border border-[#b0595c] bg-[#ff8086]" />
        <span className="ml-[3px]">RGB: 255, 128, 134</span>
      </PropRow>
      <PropRow label="Opacity" chev>
        <div className="h-[16px] w-[16px] bg-[repeating-conic-gradient(#000_0_25%,#fff_0_50%)] bg-[length:4px_4px]" />
        <span className="ml-[4px]">100%</span>
      </PropRow>
      <PropRow label="Blend Mode" chev>
        <div className="flex h-[15px] w-[15px] items-center justify-center border border-[#aaa] bg-[#1d8fd8]">
          <div className="h-[9px] w-[9px] bg-[#0f4a10]" />
        </div>
        <span className="ml-[4px]">Multiply</span>
      </PropRow>
    </div>
  )
}

function Tooltip() {
  return (
    <div className="absolute left-[740px] top-[130px] z-10 h-[66px] w-[235px] rounded-[4px] bg-[#fdfde2] px-[7px] pt-[7px] text-[#444] shadow-[1px_1px_3px_rgba(0,0,0,0.35)]">
      <div className="pb-[2px] font-semibold leading-[16px] text-[#333]">Highlight Text Tool</div>
      <div className="border-t border-[#d8d8c0] pl-[6px] pt-[3px] leading-[15px] whitespace-nowrap">
        <div>Select and highlight base content text.</div>
        <div className="tracking-[-0.2px]">
          Use the <span className="underline">Properties</span> pane to set properties.
        </div>
      </div>
    </div>
  )
}

export default function App() {
  return (
    <div className="relative flex h-[730px] w-[1366px] flex-col overflow-hidden bg-[#d3d3d3] text-[11.5px] leading-[15px] tracking-[-0.12px] text-[#262626] [font-family:'Noto_Sans',sans-serif]">
      <TitleBar />
      <Ribbon />
      <div className="flex min-h-0 flex-1">
        <div className="flex w-[1063px] shrink-0 flex-col">
          <div className="flex h-[31px] shrink-0 bg-[repeating-conic-gradient(#858585_0_25%,#737373_0_50%)] bg-[length:2px_2px]">
            <div className="flex h-full w-[104px] shrink-0 flex-col rounded-tr-[4px] bg-[#fbe7c6] pl-[5px]">
              <div className="flex h-[29px] items-center justify-between pr-[6px]">
                <span className="whitespace-nowrap">
                  houn page 1 <span className="text-[#1f6fa8]">*</span>
                </span>
                <svg width="7" height="7" viewBox="0 0 7 7" className="mb-[16px] shrink-0">
                  <path d="M.5 .5l6 6M6.500 .5l-6 6" stroke="#222" strokeWidth="1.300" />
                </svg>
              </div>
              <div className="h-[1px] w-[91px] bg-[#a8926c]" />
            </div>
            <div className="mt-[3px] flex h-[27px] w-[27px] shrink-0 items-center justify-center rounded-[3px] bg-[#c6c6c6]">
              <svg width="15" height="15" viewBox="0 0 15 15">
                <path d="M0 7.500h15M7.500 0v15" stroke="#333" />
              </svg>
            </div>
            <div className="ml-auto mt-[2px] flex h-[29px] w-[30px] shrink-0 items-center justify-center rounded-[3px] bg-[#c6c6c6]">
              <svg width="13" height="13" viewBox="0 0 13 13">
                <path d="M.5 .5l12 12M12.500 .5l-12 12" stroke="#333" />
              </svg>
            </div>
          </div>
          <div className="flex min-h-0 flex-1">
            <Sidebar />
            <div className="flex w-[1031px] shrink-0 flex-col">
              <div className="h-[492px] shrink-0 border-x-[3px] border-t-[6px] border-b-[3px] border-[#f4dfb6]">
                <PageView />
                <PageToolbar />
              </div>
              <div className="flex h-[9px] shrink-0 justify-center bg-[repeating-conic-gradient(#a8a8a8_0_25%,#979797_0_50%)] bg-[length:2px_2px]">
                <div className="flex h-[7px] w-[60px] items-center justify-center rounded-b-[4px] border border-[#777] bg-[#ececec]">
                  <Chev />
                </div>
              </div>
              <div className="flex flex-1 flex-col bg-white">
                <div className="flex h-[22px] shrink-0 items-center justify-between pl-[5px] pr-[7px]">
                  <span>Attachments</span>
                  <svg width="7" height="7" viewBox="0 0 7 7" className="shrink-0">
                    <path d="M.5 .5l6 6M6.500 .5l-6 6" stroke="#222" strokeWidth="1.300" />
                  </svg>
                </div>
                <div className="flex h-[11px] shrink-0 items-start overflow-hidden border-b-2 border-black bg-[#f0f0f0] pl-[5px]">
                  <div className="h-[9px] w-[8px] shrink-0 bg-[repeating-conic-gradient(#c4c4c4_0_25%,transparent_0_50%)] bg-[length:2px_2px]" />
                  <svg width="16" height="9" viewBox="0 0 16 9" className="ml-[2px] shrink-0">
                    <Gear x={8} y={8} r={7} c="#999" />
                  </svg>
                  <Divider className="ml-[79px] h-[9px]" />
                  <div className="ml-[16px]">
                    <SmallClip />
                  </div>
                  <div className="ml-[46px]">
                    <SmallClip />
                  </div>
                  <Divider className="ml-[32px] h-[9px]" />
                  <div className="ml-[19px]">
                    <SmallClip />
                  </div>
                  <Divider className="ml-[30px] h-[9px]" />
                  <div className="ml-[9px] mt-[3px] h-[6px] w-[16px] shrink-0 rounded-t-[2px] bg-[#b09a96]" />
                </div>
              </div>
            </div>
          </div>
        </div>
        <div className="flex h-full w-[12px] shrink-0 items-center justify-center bg-[repeating-conic-gradient(#a8a8a8_0_25%,#979797_0_50%)] bg-[length:2px_2px]">
          <div className="flex h-[60px] w-[9px] items-center justify-center rounded-[3px] border border-[#777] bg-[#ececec]">
            <svg width="5" height="8" viewBox="0 0 5 8">
              <path d="M1 1l3 3-3 3" fill="none" stroke="#222" strokeWidth="1.500" />
            </svg>
          </div>
        </div>
        <Properties />
      </div>
      <Tooltip />
    </div>
  )
}
